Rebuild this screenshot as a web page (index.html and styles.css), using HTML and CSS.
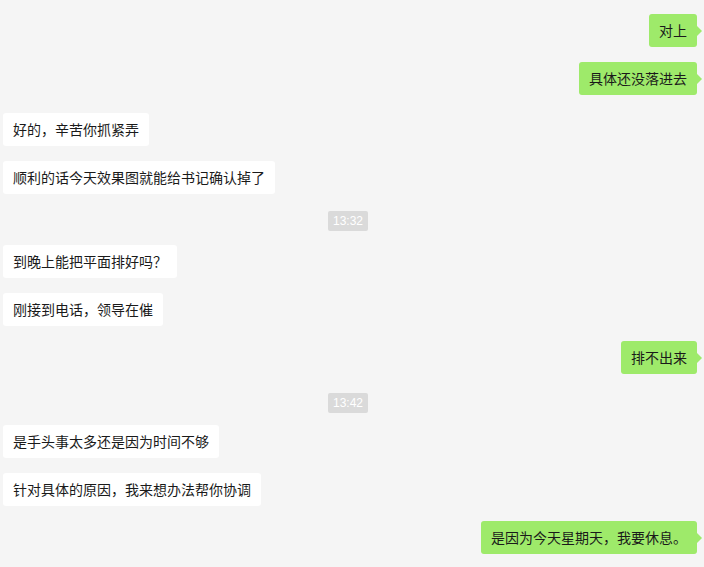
FILE: index.html
```html
<!DOCTYPE html>
<html lang="zh">
<head>
<meta charset="utf-8">
<link rel="stylesheet" href="styles.css">
</head>
<body>
<div class="chat">
  <div class="row right"><div class="bubble me">对上</div></div>
  <div class="row right"><div class="bubble me">具体还没落进去</div></div>
  <div class="row left g18"><div class="bubble other">好的，辛苦你抓紧弄</div></div>
  <div class="row left"><div class="bubble other">顺利的话今天效果图就能给书记确认掉了</div></div>
  <div class="row center g17"><div class="time">13:32</div></div>
  <div class="row left g14"><div class="bubble other">到晚上能把平面排好吗？</div></div>
  <div class="row left"><div class="bubble other">刚接到电话，领导在催</div></div>
  <div class="row right"><div class="bubble me">排不出来</div></div>
  <div class="row center g19"><div class="time">13:42</div></div>
  <div class="row left g12"><div class="bubble other">是手头事太多还是因为时间不够</div></div>
  <div class="row left"><div class="bubble other">针对具体的原因，我来想办法帮你协调</div></div>
  <div class="row right"><div class="bubble me">是因为今天星期天，我要休息。</div></div>
</div>
</body>
</html>
```
FILE: styles.css
```css
html, body {
  margin: 0;
  padding: 0;
  background: #f5f5f5;
}
body {
  width: 704px;
  height: 567px;
  overflow: hidden;
  font-family: "Noto Sans CJK SC", "Microsoft YaHei", sans-serif;
}
.chat {
  display: flex;
  flex-direction: column;
  padding: 14px 7px 0 3px;
}
.row {
  display: flex;
  margin-top: 15px;
}
.row:first-child { margin-top: 0; }
.row.g18 { margin-top: 18px; }
.row.g17 { margin-top: 17px; }
.row.g14 { margin-top: 14px; }
.row.g19 { margin-top: 19px; }
.row.g12 { margin-top: 12px; }
.right { justify-content: flex-end; }
.left { justify-content: flex-start; }
.center { justify-content: center; padding-right: 4px; }
.bubble {
  position: relative;
  height: 33px;
  line-height: 33px;
  padding: 0 10px;
  font-size: 14px;
  color: #1a1a1a;
  border-radius: 3px;
  white-space: nowrap;
}
.bubble.me {
  background: #9eea6a;
}
.bubble.me::after {
  content: "";
  position: absolute;
  right: -5px;
  top: 12px;
  border-style: solid;
  border-width: 5px 0 5px 5px;
  border-color: transparent transparent transparent #9eea6a;
}
.bubble.other {
  background: #ffffff;
}
.time {
  height: 20px;
  line-height: 20px;
  padding: 0 5px;
  font-size: 12px;
  color: #ffffff;
  background: #dadada;
  border-radius: 2px;
  font-family: "Liberation Sans", Arial, sans-serif;
}
```
